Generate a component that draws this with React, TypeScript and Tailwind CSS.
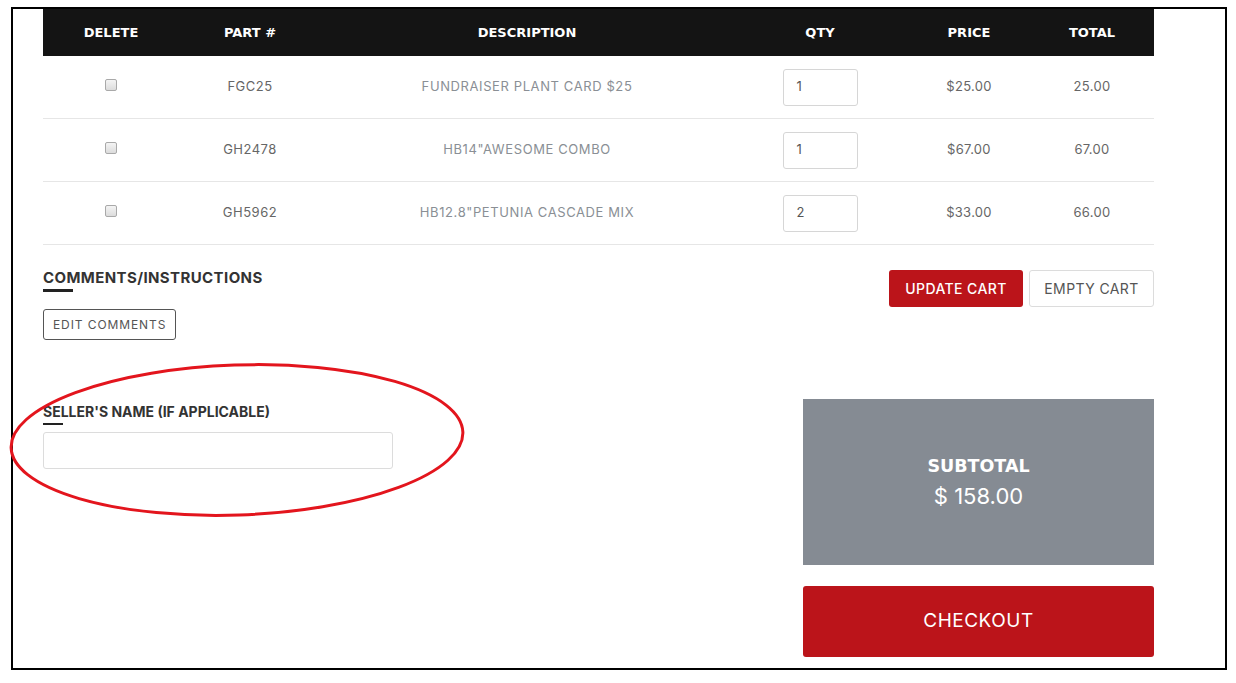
import React from "react";

const items = [
  { part: "FGC25", desc: "FUNDRAISER PLANT CARD $25", qty: "1", price: "$25.00", total: "25.00" },
  { part: "GH2478", desc: "HB14\"AWESOME COMBO", qty: "1", price: "$67.00", total: "67.00" },
  { part: "GH5962", desc: "HB12.8\"PETUNIA CASCADE MIX", qty: "2", price: "$33.00", total: "66.00" },
];

const heavy = { fontFamily: '"DejaVu Sans", sans-serif' };

const App = () => {
  return (
    <div className="w-[1236px] h-[683px] bg-white pt-[7px]" style={{ fontFamily: "Inter, sans-serif" }}>
      <div className="relative ml-[11px] w-[1216px] h-[663px] border-2 border-black pl-[30px] pr-[71px]">
        {/* Cart table */}
        <div className="w-[1111px]">
          <div className="flex h-[47px] items-center bg-[#141414] text-white text-[13px] font-bold" style={heavy}>
            <div className="w-[136px] text-center">DELETE</div>
            <div className="w-[142px] text-center">PART #</div>
            <div className="w-[412px] text-center">DESCRIPTION</div>
            <div className="w-[174px] text-center">QTY</div>
            <div className="w-[124px] text-center">PRICE</div>
            <div className="w-[122px] text-center">TOTAL</div>
          </div>
          {items.map((item) => (
            <div key={item.part} className="flex h-[63px] items-center border-b border-[#e6e6e6] text-[13px]">
              <div className="w-[136px] flex justify-center">
                <div className="w-[12px] h-[12px] -mt-[4px] rounded-[2px] border border-[#a9a9a9] bg-gradient-to-b from-[#f4f4f4] to-[#dcdcdc]" />
              </div>
              <div className="w-[142px] text-center text-[#666] tracking-[0.5px]">{item.part}</div>
              <div className="w-[412px] text-center text-[#8a8f95] tracking-[0.6px]">{item.desc}</div>
              <div className="w-[174px] flex justify-center">
                <div className="w-[75px] h-[37px] border border-[#d6d6d6] rounded-[3px] flex items-center pl-[13px] text-[#555]">
                  {item.qty}
                </div>
              </div>
              <div className="w-[124px] text-center text-[#666] tracking-[0.3px]">{item.price}</div>
              <div className="w-[122px] text-center text-[#666] tracking-[0.3px]">{item.total}</div>
            </div>
          ))}
        </div>

        <div className="flex w-[1111px] pt-[24px]">
          {/* Left side: comments + seller */}
          <div className="flex-1">
            <h2 className="text-[15px] font-bold text-[#333] leading-[17px] tracking-[0.4px]">COMMENTS/INSTRUCTIONS</h2>
            <div className="mt-[3px] w-[30px] h-[3px] bg-[#222]" />
            <button className="mt-[17px] h-[31px] px-[9px] border border-[#555] rounded-[3px] text-[12px] text-[#555] tracking-[0.9px] bg-white">
              EDIT COMMENTS
            </button>
            <h2 className="mt-[64px] text-[14px] font-bold text-[#333] leading-[16px]">SELLER'S NAME (IF APPLICABLE)</h2>
            <div className="mt-[3px] w-[20px] h-[2px] bg-[#222]" />
            <div className="mt-[7px] w-[350px] h-[37px] border border-[#dcdcdc] rounded-[3px] bg-white" />
          </div>

          {/* Right side: actions + totals */}
          <div className="w-[351px] flex flex-col items-end">
            <div className="flex gap-[6px] mt-[1px]">
              <button className="h-[37px] w-[134px] bg-[#bb141a] text-white text-[14px] font-medium tracking-[0.4px] rounded-[3px]">
                UPDATE CART
              </button>
              <button className="h-[37px] w-[125px] border border-[#dcdcdc] text-[#555] text-[14px] tracking-[0.4px] rounded-[3px] bg-white">
                EMPTY CART
              </button>
            </div>
            <div className="mt-[92px] w-[351px] h-[166px] bg-[#858b93] flex flex-col items-center justify-center text-white">
              <div className="text-[17.5px] font-bold leading-[20px] mt-[2px]" style={heavy}>SUBTOTAL</div>
              <div className="text-[22px] leading-[28px] mt-[6px]">$ 158.00</div>
            </div>
            <button className="mt-[21px] w-[351px] h-[71px] bg-[#bb141a] rounded-[3px] text-white text-[19px] tracking-[0.5px]">
              CHECKOUT
            </button>
          </div>
        </div>

        {/* red annotation circle */}
        <svg className="absolute left-[-4px] top-[348px] pointer-events-none" width="470" height="170" viewBox="0 0 470 170">
          <ellipse cx="228" cy="83" rx="226" ry="75" fill="none" stroke="#e3151d" strokeWidth="3" transform="rotate(-2 228 83)" />
        </svg>
      </div>
    </div>
  );
};

export default App;
